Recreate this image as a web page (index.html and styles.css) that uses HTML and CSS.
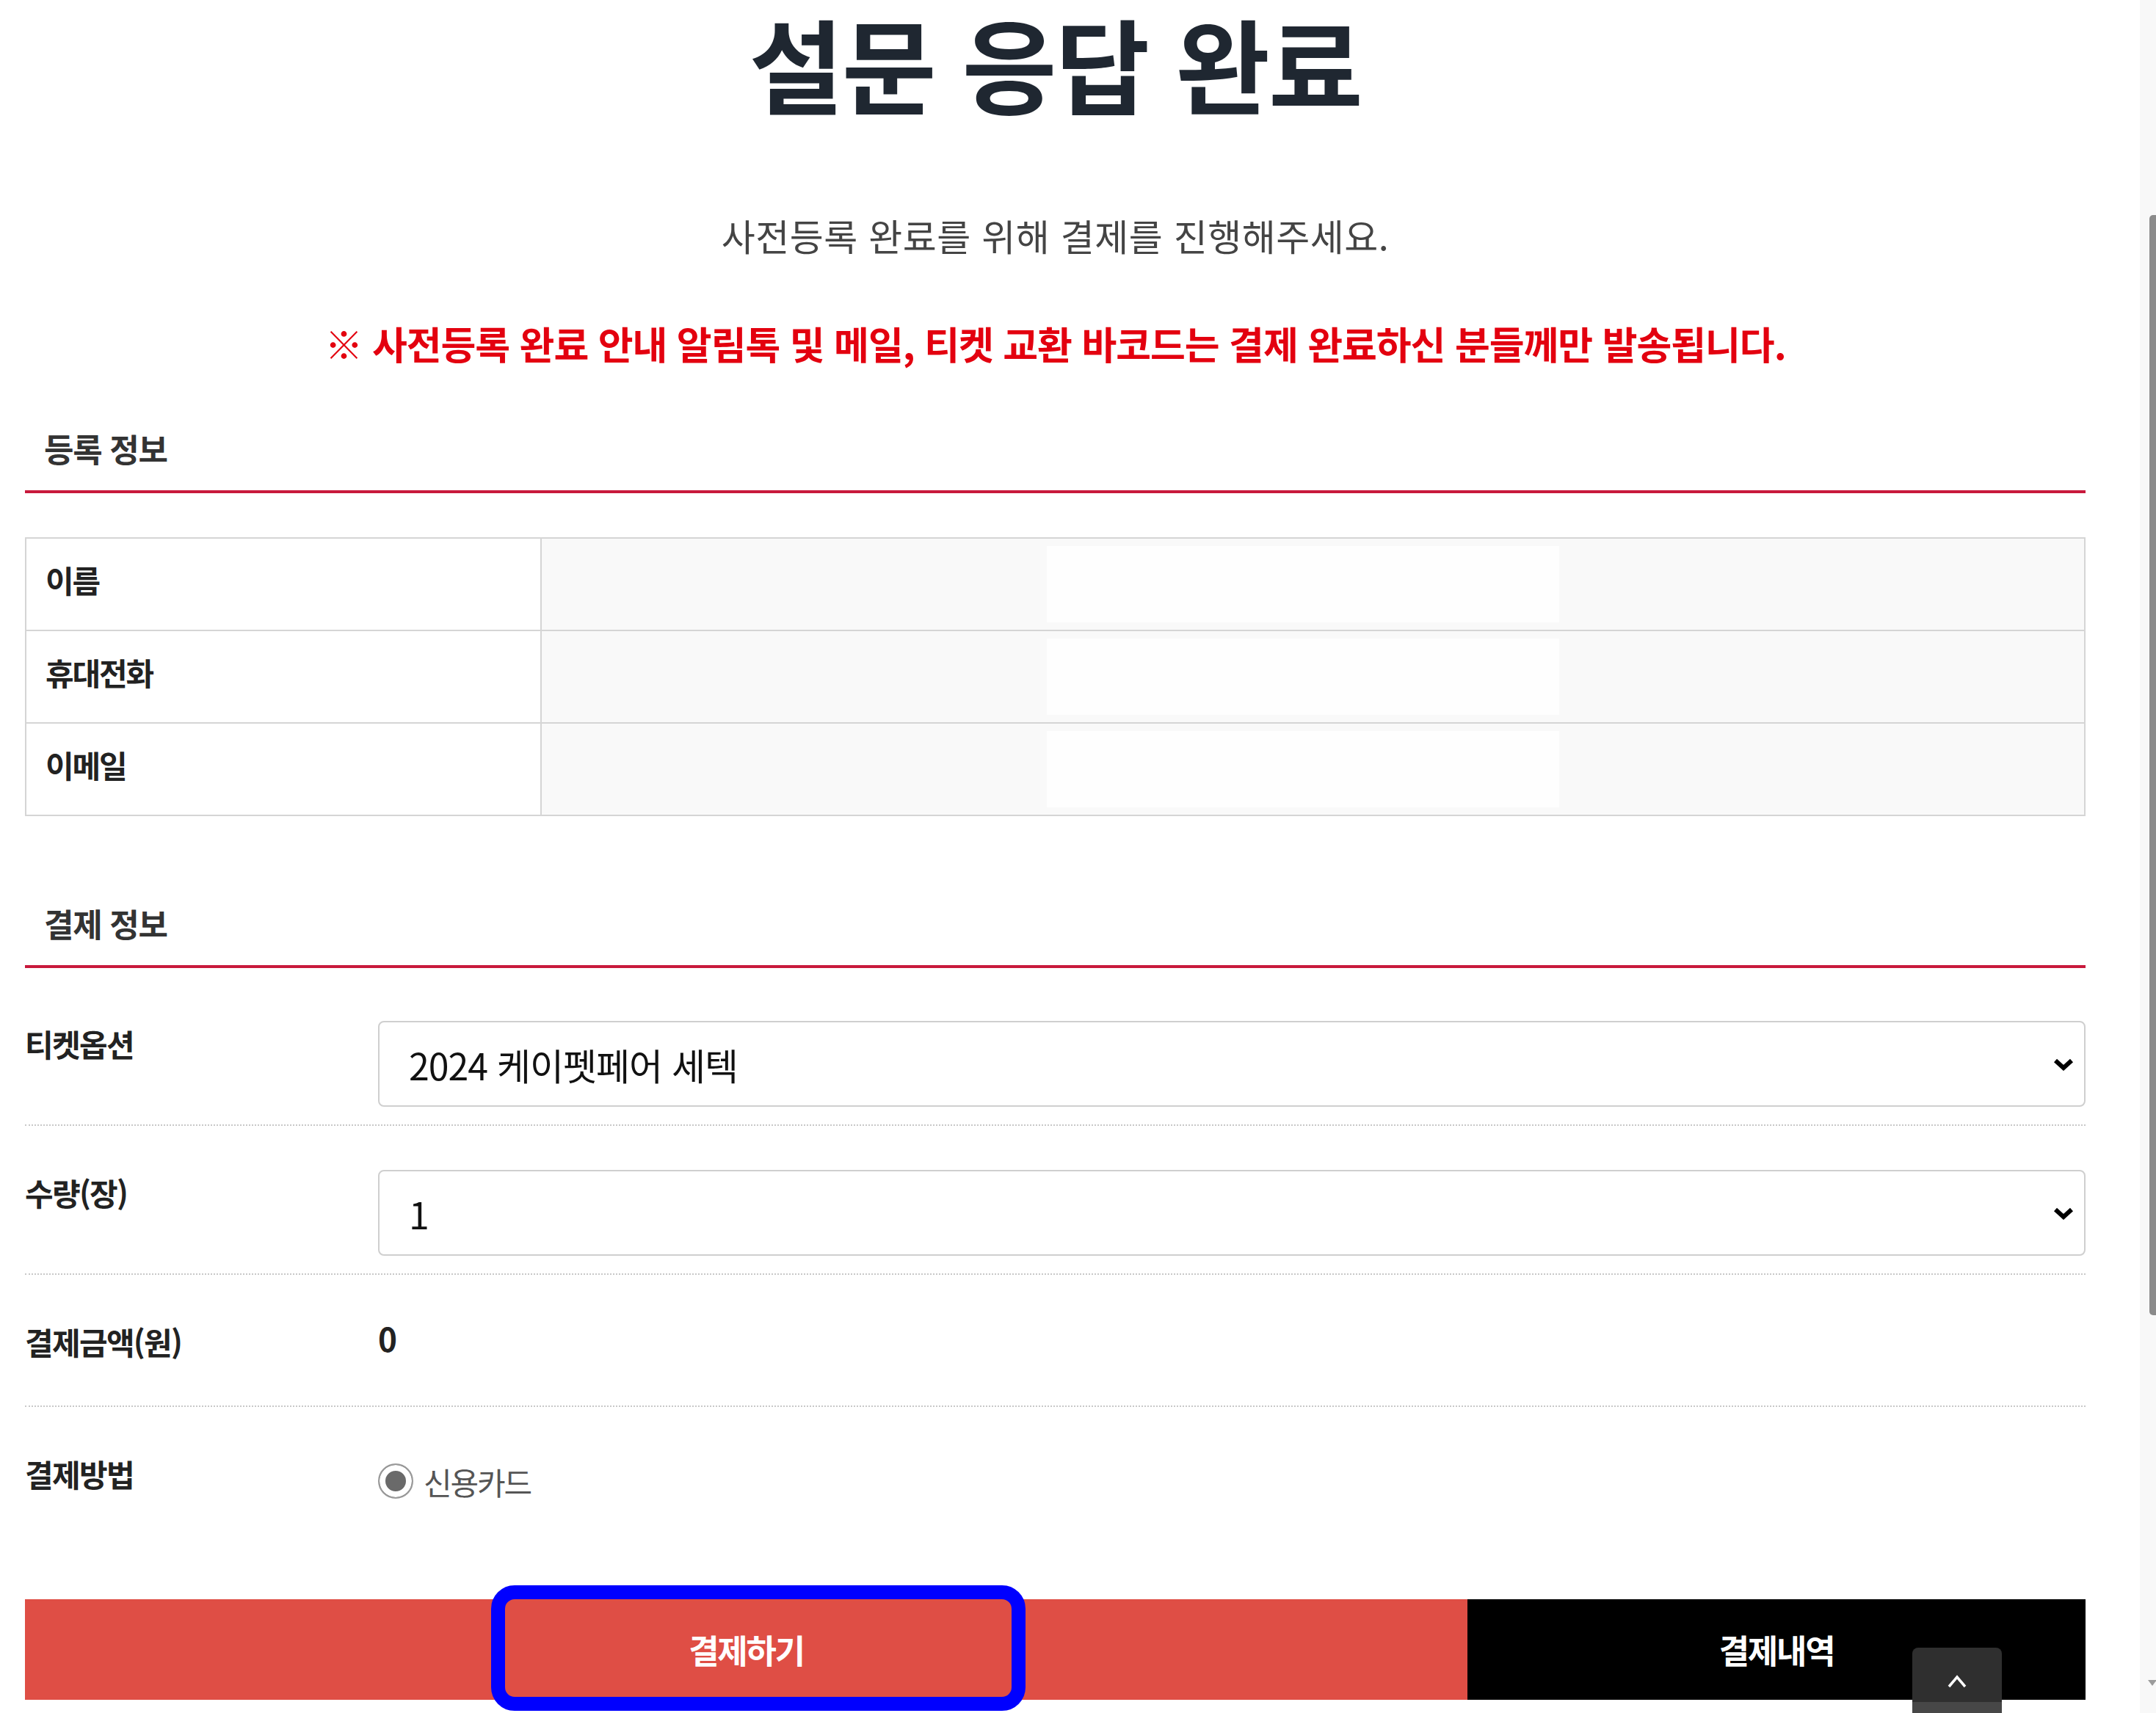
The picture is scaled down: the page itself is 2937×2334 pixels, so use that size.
FILE: index.html
```html
<!DOCTYPE html>
<html lang="ko">
<head>
    <meta charset="UTF-8">
    <meta name="viewport" content="width=device-width, initial-scale=1.0">
    <title>설문 응답 완료</title>
    <link rel="stylesheet" href="styles.css">
</head>
<body>

<div class="page">
    <div class="container">
        <h1 class="title">설문 응답 완료</h1>
        <p class="lead">사전등록 완료를 위해 결제를 진행해주세요.</p>
        <p class="notice">※ 사전등록 완료 안내 알림톡 및 메일, 티켓 교환 바코드는 결제 완료하신 분들께만 발송됩니다.</p>

        <h2 class="section-title">등록 정보</h2>
        <table class="info-table">
            <tr>
                <th>이름</th>
                <td><div class="masked"></div></td>
            </tr>
            <tr>
                <th>휴대전화</th>
                <td><div class="masked"></div></td>
            </tr>
            <tr>
                <th>이메일</th>
                <td><div class="masked"></div></td>
            </tr>
        </table>

        <h2 class="section-title section-pay">결제 정보</h2>

        <div class="form-row first">
            <div class="form-label">티켓옵션</div>
            <div class="form-field">
                <div class="select-box">
                    <span>2024 케이펫페어 세텍</span>
                    <svg class="chevron" width="30" height="18" viewBox="0 0 30 18"><polyline points="4,4 15,14 26,4" /></svg>
                </div>
            </div>
        </div>

        <div class="form-row">
            <div class="form-label">수량(장)</div>
            <div class="form-field">
                <div class="select-box">
                    <span>1</span>
                    <svg class="chevron" width="30" height="18" viewBox="0 0 30 18"><polyline points="4,4 15,14 26,4" /></svg>
                </div>
            </div>
        </div>

        <div class="form-row">
            <div class="form-label">결제금액(원)</div>
            <div class="form-field">
                <div class="amount">0</div>
            </div>
        </div>

        <div class="form-row last">
            <div class="form-label">결제방법</div>
            <div class="form-field">
                <label class="radio-option"><span class="radio"></span>신용카드</label>
            </div>
        </div>

        <div class="actions">
            <button class="btn btn-pay">결제하기<span class="mark"></span></button>
            <button class="btn btn-history">결제내역</button>
            <a class="top-btn"><svg width="32" height="20" viewBox="0 0 32 20"><polyline points="5,17 16,4 27,17" /></svg></a>
        </div>
    </div>
</div>

<div class="scrollbar">
    <div class="thumb"></div>
    <div class="arrow"></div>
</div>

</body>
</html>
```

FILE: styles.css
```css
html, body {
    margin: 0;
    height: 100%;
    overflow: hidden;
}
body {
    display: flex;
    font-family: "Noto Sans CJK KR", "Noto Sans", sans-serif;
    color: #222;
    background: #fff;
}
.page {
    flex: 1;
    padding-left: 34px;
}
.container {
    width: 2807px;
}
.title {
    margin: 0;
    font-size: 140px;
    line-height: 1.2;
    font-weight: 700;
    color: #1f2731;
    text-align: center;
    letter-spacing: -0.015em;
}
.lead {
    margin: 127px 0 0;
    font-size: 50px;
    line-height: 1;
    color: #444;
    text-align: center;
    letter-spacing: 0.01em;
}
.notice {
    margin: 97px 0 0;
    font-size: 52px;
    line-height: 1;
    font-weight: 700;
    color: #e3000f;
    text-align: center;
    letter-spacing: -0.02em;
}
.section-title {
    margin: 95px 0 0;
    padding: 0 0 35px 26px;
    font-size: 44px;
    line-height: 1;
    font-weight: 700;
    color: #333;
    letter-spacing: -0.03em;
    border-bottom: 4px solid #c8193c;
}
.section-pay {
    margin-top: 124px;
}

/* registration table */
.info-table {
    margin-top: 60px;
    width: 100%;
    border-collapse: collapse;
}
.info-table th,
.info-table td {
    border: 2px solid #d5d5d5;
}
.info-table th {
    width: 674px;
    padding: 0 0 14px 26px;
    text-align: left;
    font-size: 42px;
    font-weight: 700;
    letter-spacing: -0.05em;
    color: #222;
    background: #fff;
}
.info-table td {
    padding: 10px 0;
    background: #f9f9f9;
}
.masked {
    margin-left: 688px;
    width: 698px;
    height: 104px;
    background: #fefefe;
}

/* payment form */
.form-row {
    display: flex;
    align-items: flex-start;
    padding: 60px 0 24px;
    border-bottom: 2px dotted #c8c8c8;
}
.form-row.first {
    padding-top: 72px;
}
.form-row.last {
    border-bottom: none;
}
.form-label {
    width: 481px;
    flex-shrink: 0;
    padding-top: 10px;
    font-size: 42px;
    line-height: 1;
    font-weight: 700;
    letter-spacing: -0.04em;
    color: #222;
}
.form-field {
    flex: 1;
    min-height: 94px;
}
.select-box {
    display: flex;
    align-items: center;
    justify-content: space-between;
    height: 117px;
    box-sizing: border-box;
    padding: 0 13px 0 40px;
    border: 2px solid #cfcfcf;
    border-radius: 8px;
    background: #fff;
    font-size: 50px;
    letter-spacing: -0.02em;
    color: #111;
}
.chevron polyline {
    fill: none;
    stroke: #000;
    stroke-width: 6;
}
.amount {
    padding-top: 4px;
    font-size: 44px;
    line-height: 1;
    font-weight: 700;
    color: #222;
}
.radio-option {
    display: flex;
    align-items: center;
    gap: 14px;
    height: 82px;
    font-size: 42px;
    letter-spacing: -0.05em;
    color: #555;
}
.radio {
    width: 48px;
    height: 48px;
    box-sizing: border-box;
    border: 2px solid #9a9a9a;
    border-radius: 50%;
    background: #6a6a6a;
    box-shadow: inset 0 0 0 8px #fff;
}

/* bottom buttons */
.actions {
    position: relative;
    display: flex;
    height: 137px;
    margin-top: 84px;
}
.btn {
    border: 0;
    padding: 0;
    font-family: inherit;
    font-size: 45px;
    font-weight: 700;
    letter-spacing: -0.05em;
    color: #fff;
    cursor: pointer;
}
.btn-pay {
    position: relative;
    flex: 0 0 1965px;
    background: #df4e45;
}
.btn-history {
    flex: 1;
    background: #000;
}
.mark {
    position: absolute;
    left: 635px;
    top: -19px;
    width: 728px;
    height: 171px;
    box-sizing: border-box;
    border: 19px solid #0000ff;
    border-radius: 32px;
}
.top-btn {
    position: absolute;
    right: 114px;
    top: 66px;
    width: 122px;
    height: 100px;
    display: flex;
    justify-content: center;
    padding-top: 36px;
    box-sizing: border-box;
    border-radius: 8px 8px 0 0;
    background: linear-gradient(#2f2f2f 74px, #474747 74px);
}
.top-btn polyline {
    fill: none;
    stroke: #fff;
    stroke-width: 3.5;
}

/* page scrollbar */
.scrollbar {
    width: 22px;
    display: flex;
    flex-direction: column;
    background: #f8f8f8;
}
.thumb {
    margin: 293px 0 0 13px;
    height: 1499px;
    border-radius: 5px 0 0 5px;
    background: #8b8b8b;
}
.arrow {
    margin: auto 0 37px 11px;
    width: 0;
    border-left: 6px solid transparent;
    border-right: 6px solid transparent;
    border-top: 8px solid #9c9c9c;
}
```
